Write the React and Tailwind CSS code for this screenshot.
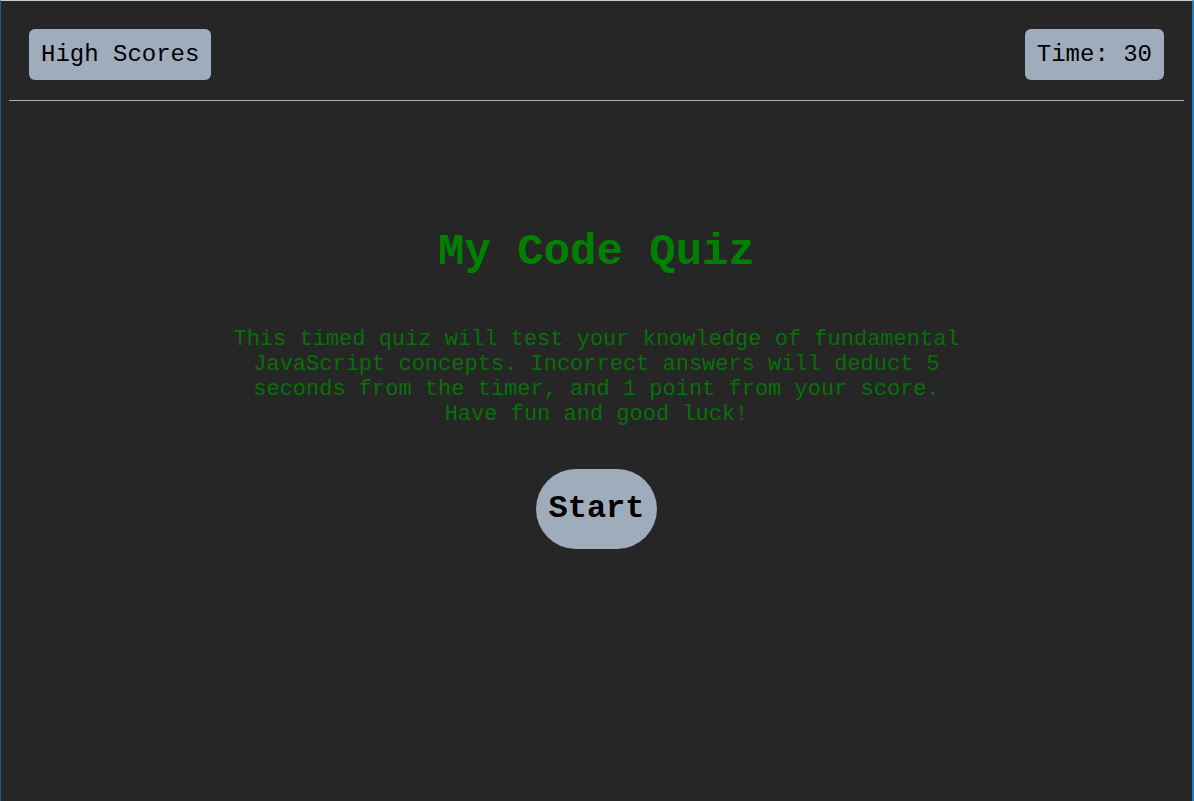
export default function App() {
  const mono = { fontFamily: '"Liberation Mono", "Courier New", monospace' };
  return (
    <div
      className="w-full h-[801px] bg-[#262626] border-t border-t-[#cfcfcf] border-l border-l-[#1b5f86] border-r-2 border-r-[#1f7ec0] overflow-hidden"
      style={mono}
    >
      <div className="p-2">
        <header className="flex justify-between items-start px-5 py-5 border-b border-b-[#9fb4c9]">
          <button className="bg-[#9eacbb] text-black text-[24px] leading-[27px] px-3 py-3 rounded-md">
            High Scores
          </button>
          <div className="bg-[#9eacbb] text-black text-[24px] leading-[27px] px-3 py-3 rounded-md">
            Time: 30
          </div>
        </header>
        <main className="flex flex-col items-center">
          <h1 className="mt-[126px] text-[44px] leading-[50px] font-bold text-[#008000]">
            My Code Quiz
          </h1>
          <p className="mt-[50px] w-[740px] text-center text-[22px] leading-[25px] text-[#087008]">
            This timed quiz will test your knowledge of fundamental JavaScript concepts. Incorrect answers will deduct 5 seconds from the timer, and 1 point from your score. Have fun and good luck!
          </p>
          <button className="mt-[42px] bg-[#9eacbb] text-black text-[32px] leading-[36px] font-bold px-3 py-[22px] rounded-full">
            Start
          </button>
        </main>
      </div>
    </div>
  );
}
